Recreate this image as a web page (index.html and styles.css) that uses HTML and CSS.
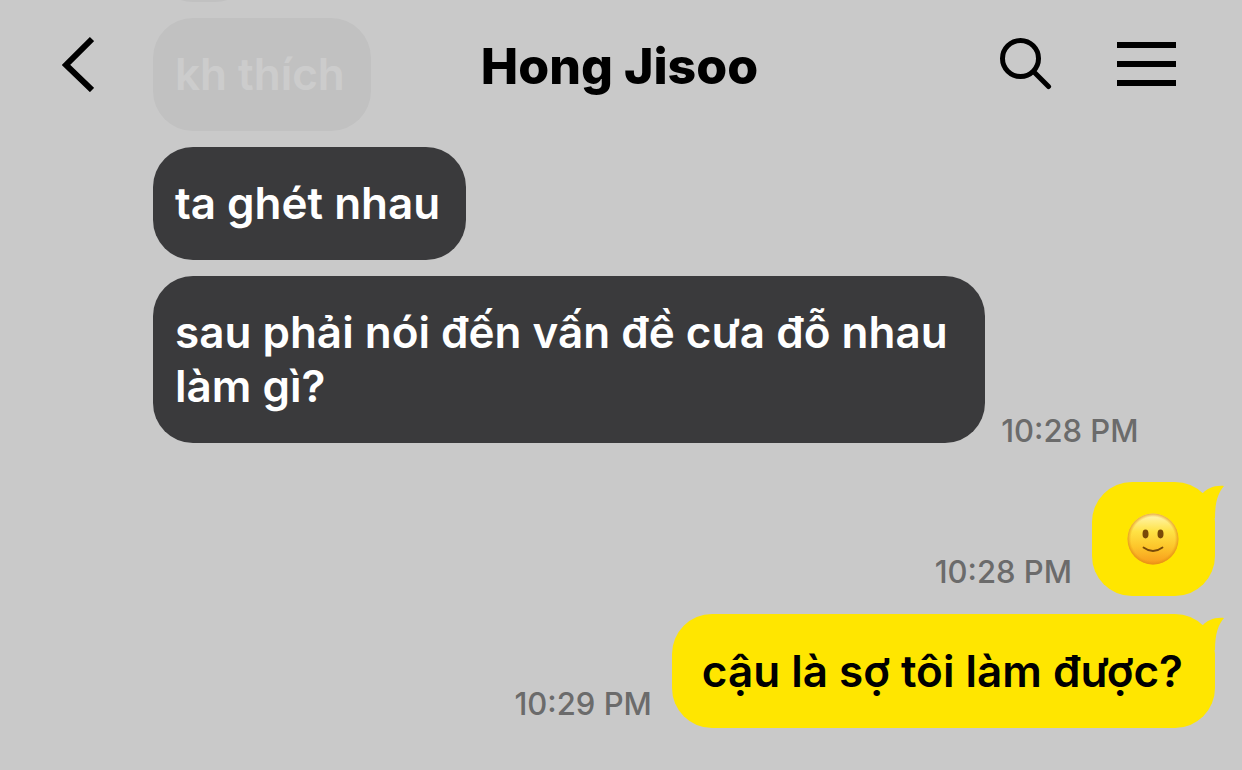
FILE: index.html
```
<!DOCTYPE html>
<html lang="vi">

<head>
  <meta charset="UTF-8">
  <meta name="viewport" content="width=device-width, initial-scale=1.0">
  <title>Hong Jisoo</title>
  <link rel="stylesheet" href="styles.css">
</head>

<body>
  <header class="header">
    <button class="icon-btn" type="button" aria-label="Back">
      <svg width="32" height="56" viewBox="0 0 32 56">
        <path d="M30 3 L4 29 L30 54" fill="none" stroke="#000" stroke-width="6" />
      </svg>
    </button>
    <h1 class="title">Hong Jisoo</h1>
    <div class="actions">
      <button class="icon-btn" type="button" aria-label="Search">
        <svg width="52" height="52" viewBox="0 0 52 52">
          <circle cx="20.5" cy="20.5" r="18" fill="none" stroke="#000" stroke-width="5" />
          <path d="M34 34 L48.5 48.5" stroke="#000" stroke-width="5" stroke-linecap="round" />
        </svg>
      </button>
      <button class="icon-btn" type="button" aria-label="Menu">
        <svg width="60" height="46" viewBox="0 0 60 46">
          <path d="M0 4 H59 M0 23 H59 M0 42 H59" stroke="#000" stroke-width="6" />
        </svg>
      </button>
    </div>
  </header>

  <main class="chat">
    <section class="group">
      <div class="row">
        <div class="bubble bubble-short"></div>
      </div>
      <div class="row">
        <div class="bubble">kh thích</div>
      </div>
      <div class="row">
        <div class="bubble">ta ghét nhau</div>
      </div>
      <div class="row">
        <div class="bubble">sau phải nói đến vấn đề cưa đỗ nhau làm gì?</div>
        <time class="time">10:28 PM</time>
      </div>
    </section>

    <section class="group group-mine">
      <div class="row row-mine">
        <time class="time">10:28 PM</time>
        <div class="bubble bubble-mine">
          <svg class="emoji" width="61" height="54" viewBox="0 0 61 54" role="img" aria-label="🙂">
            <defs>
              <linearGradient id="face" x1="0" y1="0" x2="0" y2="1">
                <stop offset="0" stop-color="#fff7b8" />
                <stop offset="0.35" stop-color="#ffe245" />
                <stop offset="0.65" stop-color="#fdc62b" />
                <stop offset="1" stop-color="#f79a1c" />
              </linearGradient>
              <radialGradient id="edge">
                <stop offset="0.86" stop-color="#e89410" stop-opacity="0" />
                <stop offset="1" stop-color="#df8a12" stop-opacity="0.7" />
              </radialGradient>
            </defs>
            <circle cx="31" cy="27" r="25.5" fill="url(#face)" />
            <circle cx="31" cy="27" r="25.5" fill="url(#edge)" />
            <ellipse cx="23.5" cy="22" rx="3" ry="4.4" fill="#7a4a08" />
            <ellipse cx="38.5" cy="22" rx="3" ry="4.4" fill="#7a4a08" />
            <path d="M21.500 35.500 Q31 42.500 40.500 35.500" fill="none" stroke="#7a4a08" stroke-width="1.800" stroke-linecap="round" />
          </svg>
          <svg class="tail" width="30" height="40" viewBox="0 0 30 40">
            <path d="M0 10 L8 11 C12 7 19 3 29 4 C23 11 20 20 20 36 L0 36 Z" fill="#ffe600" />
          </svg>
        </div>
      </div>
      <div class="row row-mine">
        <time class="time">10:29 PM</time>
        <div class="bubble bubble-mine">
          cậu là sợ tôi làm được?
          <svg class="tail" width="30" height="40" viewBox="0 0 30 40">
            <path d="M0 10 L8 11 C12 7 19 3 29 4 C23 11 20 20 20 36 L0 36 Z" fill="#ffe600" />
          </svg>
        </div>
      </div>
    </section>
  </main>
</body>

</html>
```
FILE: styles.css
```
* {
  box-sizing: border-box;
}

body {
  margin: 0;
  background: #c9c9c9;
  font-family: Inter, "Noto Sans", sans-serif;
  color: #000;
}

/* translucent bar, older messages fade out under it */
.header {
  position: fixed;
  top: 0;
  left: 0;
  right: 0;
  z-index: 1;
  display: grid;
  grid-template-columns: 1fr auto 1fr;
  align-items: center;
  height: 132px;
  padding: 0 65px 4px 62px;
  background: rgba(201, 201, 201, 0.945);
}

.title {
  margin: 0;
  padding-top: 4px;
  font-size: 50px;
  line-height: 60px;
  font-weight: 800;
}

.icon-btn {
  display: block;
  justify-self: start;
  padding: 0;
  border: 0;
  background: none;
  cursor: pointer;
}

.icon-btn svg {
  display: block;
}

.actions {
  display: flex;
  justify-self: end;
  align-items: center;
  gap: 65px;
}

.chat {
  display: flex;
  flex-direction: column;
  justify-content: flex-end;
  gap: 39px;
  height: 100vh;
  padding: 0 27px 42px 153px;
  overflow: hidden;
}

.group {
  display: flex;
  flex-direction: column;
  flex-shrink: 0;
  gap: 16px;
}

.group-mine {
  gap: 18px;
}

.row {
  display: flex;
  align-items: flex-end;
  gap: 16px;
}

.row-mine {
  justify-content: flex-end;
  gap: 20px;
}

.bubble {
  position: relative;
  max-width: 67vw;
  min-height: 113px;
  padding: 29px 26px 30px 22px;
  border-radius: 40px;
  background: #3a3a3c;
  color: #fff;
  font-size: 44px;
  line-height: 54px;
  font-weight: 600;
}

.bubble-short {
  width: 102px;
}

.bubble-mine {
  padding: 30px 32px 30px 30px;
  background: #ffe600;
  color: #000;
}

.emoji {
  display: block;
}

.tail {
  position: absolute;
  top: 0;
  right: -10px;
}

.time {
  flex-shrink: 0;
  color: #6b6b6b;
  font-size: 31px;
  line-height: 24px;
  font-weight: 500;
}

.row-mine .time {
  margin-bottom: 12px;
}
```
